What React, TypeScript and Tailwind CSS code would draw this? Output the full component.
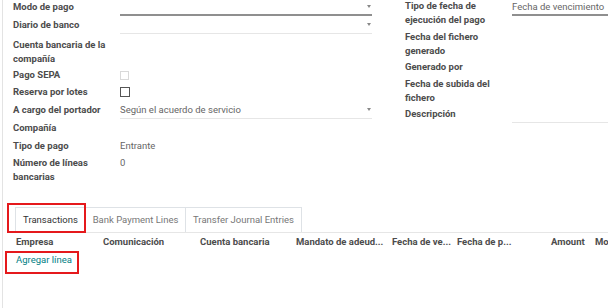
import React from "react";

const font = { fontFamily: "Roboto, 'Noto Sans', sans-serif" };

function Caret() {
  return (
    <span className="absolute right-[1px] top-[5px] w-0 h-0 border-l-[2px] border-r-[2px] border-t-[3px] border-l-transparent border-r-transparent border-t-[#888]" />
  );
}

function Label({ children }: { children: React.ReactNode }) {
  return (
    <div className="w-[107px] shrink-0 font-bold text-[#4c4c4c] leading-[14px]">
      {children}
    </div>
  );
}

export default function App() {
  return (
    <div
      className="w-[608px] h-[308px] bg-white overflow-hidden relative text-[9.5px]"
      style={font}
    >
      <div className="ml-[2px] h-full border-l border-[#e3e3e3] pl-[10px] flex flex-col">
        {/* ── Form groups ── */}
        <div className="flex">
          {/* Left group */}
          <div className="w-[359px] shrink-0 flex flex-col">
            <div className="flex h-[14px] mb-[4px]">
              <Label>Modo de pago</Label>
              <div className="relative flex-1 border-b-2 border-[#8f8f8f] h-[16px]">
                <Caret />
              </div>
            </div>
            <div className="flex h-[14px] mb-[6px]">
              <Label>Diario de banco</Label>
              <div className="relative flex-1 border-b border-[#e6e6e6] h-[16px]">
                <Caret />
              </div>
            </div>
            <div className="flex mb-[2px]">
              <Label>
                Cuenta bancaria de la
                <br />
                compañía
              </Label>
            </div>
            <div className="flex h-[14px] mb-[3px] items-center">
              <Label>Pago SEPA</Label>
              <span className="w-[9px] h-[9px] border border-[#d9d9d9]" />
            </div>
            <div className="flex h-[14px] mb-[4px] items-center">
              <Label>Reserva por lotes</Label>
              <span className="w-[10px] h-[10px] border border-[#555]" />
            </div>
            <div className="flex h-[14px] mb-[4px]">
              <Label>A cargo del portador</Label>
              <div className="relative flex-1 border-b border-[#e6e6e6] h-[16px] text-[#666] leading-[14px]">
                Según el acuerdo de servicio
                <Caret />
              </div>
            </div>
            <div className="flex h-[14px] mb-[4px]">
              <Label>Compañía</Label>
            </div>
            <div className="flex h-[14px] mb-[3px]">
              <Label>Tipo de pago</Label>
              <span className="text-[#666] leading-[14px]">Entrante</span>
            </div>
            <div className="flex">
              <Label>
                Número de líneas
                <br />
                bancarias
              </Label>
              <span className="text-[#666] leading-[14px]">0</span>
            </div>
          </div>

          {/* Right group */}
          <div className="ml-[33px] w-[220px] shrink-0 flex flex-col -mt-[1px]">
            <div className="flex mb-[3px]">
              <Label>
                Tipo de fecha de
                <br />
                ejecución del pago
              </Label>
              <div className="flex-1 h-[17px] border-b-2 border-[#8f8f8f] text-[#666] leading-[14px] pt-[1px]">
                Fecha de vencimiento
              </div>
            </div>
            <div className="flex mb-[2px]">
              <Label>
                Fecha del fichero
                <br />
                generado
              </Label>
            </div>
            <div className="flex mb-[3px]">
              <Label>Generado por</Label>
            </div>
            <div className="flex mb-[2px]">
              <Label>
                Fecha de subida del
                <br />
                fichero
              </Label>
            </div>
            <div className="flex">
              <Label>Descripción</Label>
              <div className="flex-1 h-[16px] border-b border-[#e6e6e6]" />
            </div>
          </div>
        </div>

        {/* ── Notebook ── */}
        <div className="mt-[23px] flex items-end border-b border-[#e6e6e6] h-[26px]">
          <div className="ml-[2px] h-[26px] w-[71px] border-l border-t border-r border-[#dee2e6] bg-white -mb-px flex items-center justify-center text-[#333]">
            Transactions
          </div>
          <div className="h-[25px] w-[100px] border-t border-r border-[#dee2e6] flex items-center justify-center text-[#777]">
            Bank Payment Lines
          </div>
          <div className="h-[25px] w-[116px] border-t border-r border-[#dee2e6] flex items-center justify-center text-[#777]">
            Transfer Journal Entries
          </div>
        </div>

        <div className="flex h-[19px] items-center font-bold text-[#4c4c4c] whitespace-nowrap pl-[3px]">
          <div className="w-[87px] shrink-0">Empresa</div>
          <div className="w-[97px] shrink-0">Comunicación</div>
          <div className="w-[96px] shrink-0">Cuenta bancaria</div>
          <div className="w-[96px] shrink-0">Mandato de adeud...</div>
          <div className="w-[65px] shrink-0">Fecha de ve...</div>
          <div className="w-[94px] shrink-0">Fecha de p...</div>
          <div className="w-[44px] shrink-0">Amount</div>
          <div>Mo</div>
        </div>
        <div className="pl-[3px] mt-[1px] text-[#017e84] leading-[14px]">Agregar línea</div>
      </div>

      {/* annotation boxes */}
      <div className="absolute left-[7px] top-[203px] w-[79px] h-[30px] border-2 border-[#e5191c]" />
      <div className="absolute left-[5px] top-[251px] w-[74px] h-[23px] border-2 border-[#e5191c]" />
    </div>
  );
}
